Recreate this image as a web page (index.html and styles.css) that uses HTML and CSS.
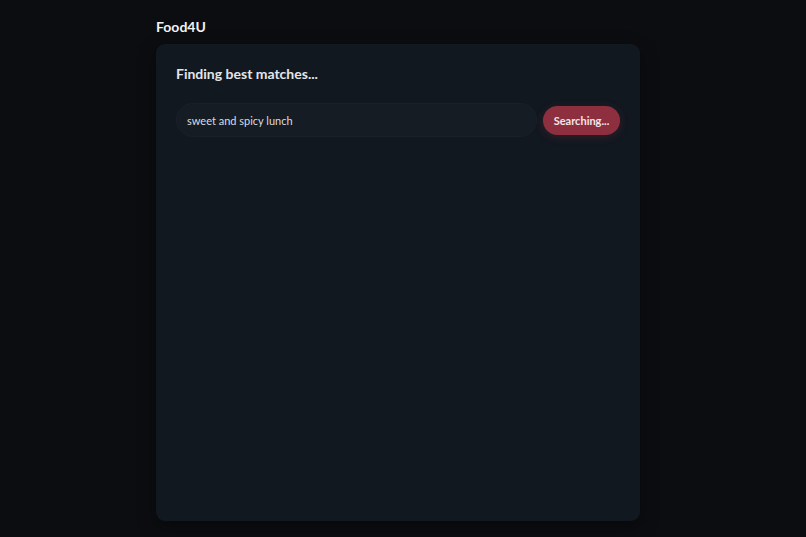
FILE: index.html
```html
<!DOCTYPE html>
<html lang="en">
<head>
<meta charset="utf-8">
<title>Food4U</title>
<link rel="stylesheet" href="styles.css">
</head>
<body>
<div class="page">
  <header class="brand">Food4U</header>
  <main class="card">
    <h1 class="card-title">Finding best matches...</h1>
    <form class="search">
      <input class="search-input" type="text" value="sweet and spicy lunch">
      <button class="search-btn" type="button">Searching...</button>
    </form>
  </main>
</div>
</body>
</html>
```

FILE: styles.css
```css
* { box-sizing: border-box; }
html, body { height: 100%; }
body {
  margin: 0;
  background: #0b0d10;
  font-family: Lato, "Noto Sans", sans-serif;
  color: #e6e8eb;
}
.page {
  width: 484px;
  margin-left: 156px;
  padding-top: 17px;
}
.brand {
  font-size: 14px;
  font-weight: 700;
  line-height: 20px;
  color: #f1f3f5;
  margin-bottom: 7px;
}
.card {
  height: 477px;
  background: #121820;
  border-radius: 9px;
  padding: 20px 20px;
  box-shadow: 0 6px 18px rgba(0,0,0,0.35);
}
.card-title {
  margin: 0 0 19px;
  font-size: 14px;
  font-weight: 700;
  line-height: 20px;
  color: #e3e6ea;
}
.search {
  display: flex;
  align-items: center;
  gap: 6px;
}
.search-input {
  flex: 1;
  height: 34px;
  border: 1px solid #1a2029;
  border-radius: 17px;
  background: #161c24;
  padding: 0 10px;
  font-family: inherit;
  font-size: 11px;
  color: #d8dce1;
  outline: none;
}
.search-btn {
  height: 29px;
  width: 77px;
  border: none;
  border-radius: 15px;
  background: #8e2f3f;
  color: #f3e6e8;
  font-family: inherit;
  font-size: 11px;
  font-weight: 700;
  padding: 0;
  box-shadow: 0 2px 8px rgba(142,47,63,0.25);
}
```
